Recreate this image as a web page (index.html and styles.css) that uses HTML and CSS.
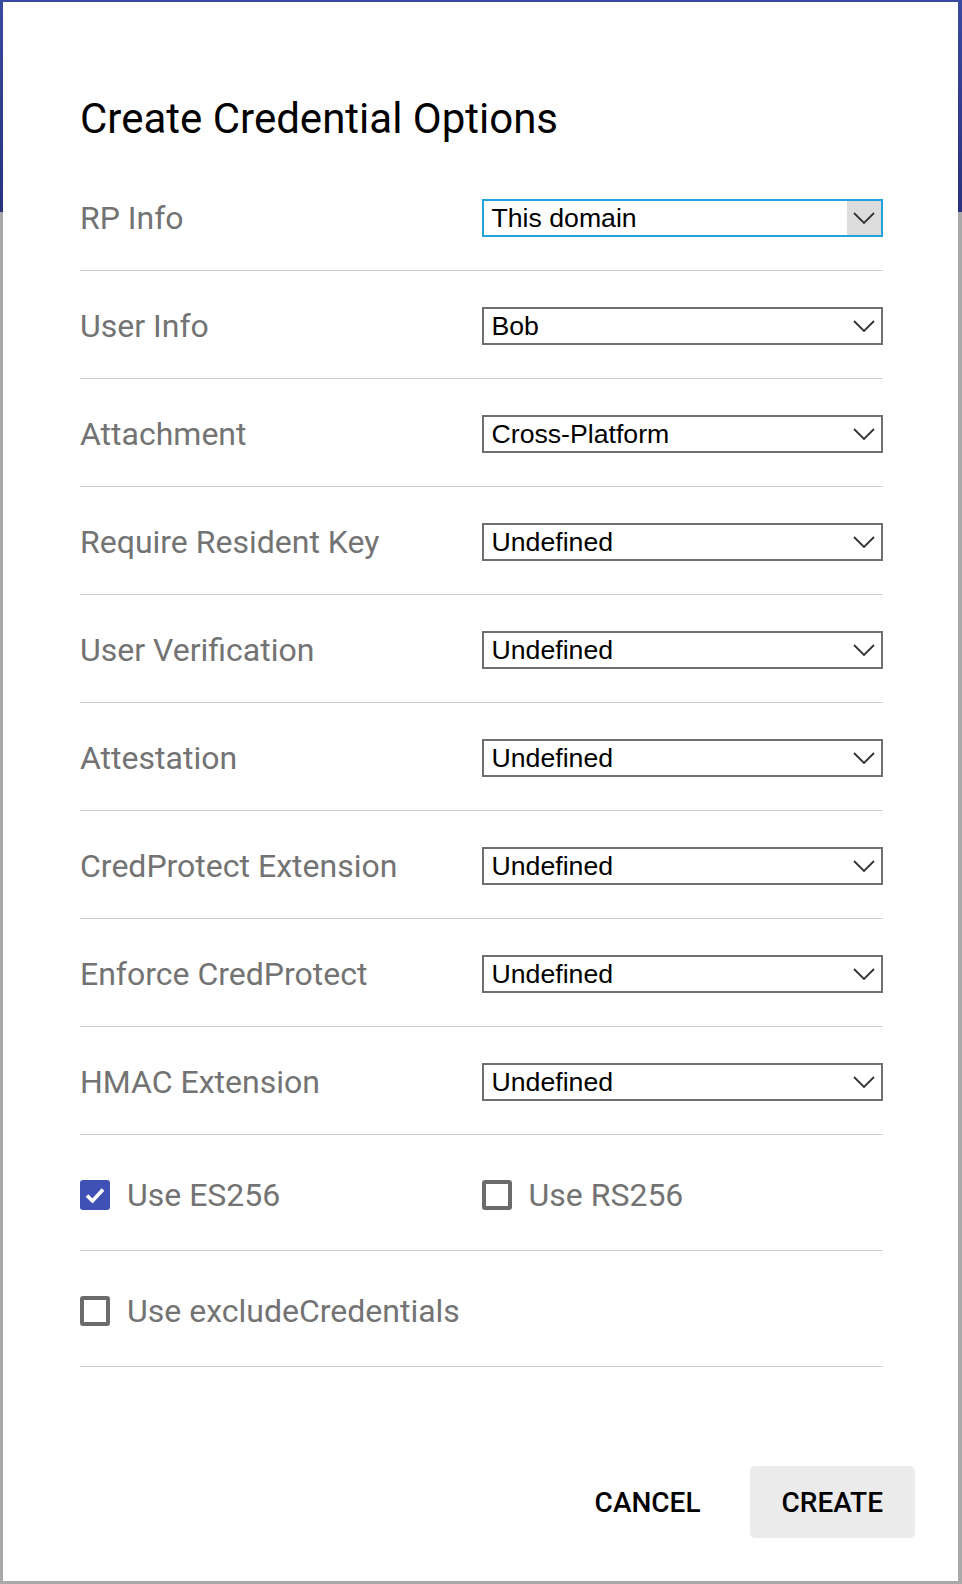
FILE: index.html
```html
<!DOCTYPE html>
<html>
<head>
<meta charset="utf-8">
<link rel="stylesheet" href="styles.css">
</head>
<body>
<div class="page">
  <div class="dialog">
    <h2 class="title">Create Credential Options</h2>
    <div class="content">
      <div class="row">
        <div class="label">RP Info</div>
        <div class="select focused"><span class="value">This domain</span><span class="arrow"><svg width="22" height="12" viewBox="0 0 22 12"><polyline points="1,1 11,11 21,1" fill="none" stroke="#333" stroke-width="1.8"/></svg></span></div>
      </div>
      <div class="row">
        <div class="label">User Info</div>
        <div class="select"><span class="value">Bob</span><span class="arrow"><svg width="22" height="12" viewBox="0 0 22 12"><polyline points="1,1 11,11 21,1" fill="none" stroke="#333" stroke-width="1.8"/></svg></span></div>
      </div>
      <div class="row">
        <div class="label">Attachment</div>
        <div class="select"><span class="value">Cross-Platform</span><span class="arrow"><svg width="22" height="12" viewBox="0 0 22 12"><polyline points="1,1 11,11 21,1" fill="none" stroke="#333" stroke-width="1.8"/></svg></span></div>
      </div>
      <div class="row">
        <div class="label">Require Resident Key</div>
        <div class="select"><span class="value">Undefined</span><span class="arrow"><svg width="22" height="12" viewBox="0 0 22 12"><polyline points="1,1 11,11 21,1" fill="none" stroke="#333" stroke-width="1.8"/></svg></span></div>
      </div>
      <div class="row">
        <div class="label">User Verification</div>
        <div class="select"><span class="value">Undefined</span><span class="arrow"><svg width="22" height="12" viewBox="0 0 22 12"><polyline points="1,1 11,11 21,1" fill="none" stroke="#333" stroke-width="1.8"/></svg></span></div>
      </div>
      <div class="row">
        <div class="label">Attestation</div>
        <div class="select"><span class="value">Undefined</span><span class="arrow"><svg width="22" height="12" viewBox="0 0 22 12"><polyline points="1,1 11,11 21,1" fill="none" stroke="#333" stroke-width="1.8"/></svg></span></div>
      </div>
      <div class="row">
        <div class="label">CredProtect Extension</div>
        <div class="select"><span class="value">Undefined</span><span class="arrow"><svg width="22" height="12" viewBox="0 0 22 12"><polyline points="1,1 11,11 21,1" fill="none" stroke="#333" stroke-width="1.8"/></svg></span></div>
      </div>
      <div class="row">
        <div class="label">Enforce CredProtect</div>
        <div class="select"><span class="value">Undefined</span><span class="arrow"><svg width="22" height="12" viewBox="0 0 22 12"><polyline points="1,1 11,11 21,1" fill="none" stroke="#333" stroke-width="1.8"/></svg></span></div>
      </div>
      <div class="row">
        <div class="label">HMAC Extension</div>
        <div class="select"><span class="value">Undefined</span><span class="arrow"><svg width="22" height="12" viewBox="0 0 22 12"><polyline points="1,1 11,11 21,1" fill="none" stroke="#333" stroke-width="1.8"/></svg></span></div>
      </div>
      <div class="row check-row">
        <div class="check">
          <span class="box checked"><svg width="30" height="30" viewBox="0 0 30 30"><polyline points="7,15.5 12.5,21 23,9.5" fill="none" stroke="#fff" stroke-width="3.6"/></svg></span>
          <span class="check-label">Use ES256</span>
        </div>
        <div class="check">
          <span class="box"></span>
          <span class="check-label">Use RS256</span>
        </div>
      </div>
      <div class="row check-row">
        <div class="check">
          <span class="box"></span>
          <span class="check-label">Use excludeCredentials</span>
        </div>
      </div>
    </div>
    <div class="actions">
      <button class="btn">CANCEL</button>
      <button class="btn filled">CREATE</button>
    </div>
  </div>
</div>
</body>
</html>
```

FILE: styles.css
```css
html, body {
  margin: 0;
  padding: 0;
}
body {
  width: 962px;
  height: 1584px;
  overflow: hidden;
}
.page {
  box-sizing: border-box;
  width: 962px;
  height: 1584px;
  padding: 2px 4px 3px 3px;
  background:
    linear-gradient(#3a49a1, #28327d) top left / 100% 212px no-repeat,
    #a9a9a9;
}
.dialog {
  box-sizing: border-box;
  height: 100%;
  background: #fff;
  display: flex;
  flex-direction: column;
  font-family: Roboto, "Liberation Sans", sans-serif;
}
.title {
  margin: 93px 75px 21px 77px;
  font-size: 42px;
  line-height: 47px;
  font-weight: 400;
  color: #000;
}
.content {
  padding: 0 75px 0 77px;
}
.row {
  display: grid;
  grid-template-columns: 1fr 1fr;
  align-items: center;
  padding: 36px 0 33px;
  border-bottom: 1px solid #cfcfcf;
}
.label {
  font-size: 32px;
  color: #737373;
  line-height: 38px;
}
.select {
  box-sizing: border-box;
  height: 38px;
  border: 2px solid #6f6f6f;
  display: flex;
  align-items: center;
  font-family: "Liberation Sans", Arial, sans-serif;
  font-size: 26.67px;
  color: #000;
}
.select.focused {
  border-color: #22a1dc;
}
.value {
  flex: 1;
  padding-left: 8px;
}
.arrow {
  width: 34px;
  height: 100%;
  display: flex;
  align-items: center;
  justify-content: center;
}
.focused .arrow {
  background: #dcdcdc;
}
.check-row {
  padding: 45px 0 40px;
}
.check {
  display: flex;
  align-items: center;
  gap: 17px;
}
.box {
  box-sizing: border-box;
  width: 30px;
  height: 30px;
  border: 4px solid #6b6b6b;
  border-radius: 3px;
  display: flex;
}
.box.checked {
  border: none;
  background: #3f51b5;
}
.check-label {
  font-size: 32px;
  color: #737373;
  line-height: 30px;
}
.actions {
  display: flex;
  justify-content: flex-end;
  gap: 17px;
  margin-top: 99px;
  padding-right: 43px;
}
.btn {
  font-family: Roboto, "Liberation Sans", sans-serif;
  font-weight: 500;
  font-size: 28px;
  color: #000;
  background: transparent;
  border: none;
  border-radius: 5px;
  height: 72px;
  padding: 0 32px;
  min-width: 165px;
}
.btn.filled {
  background: #ebebeb;
}
```
